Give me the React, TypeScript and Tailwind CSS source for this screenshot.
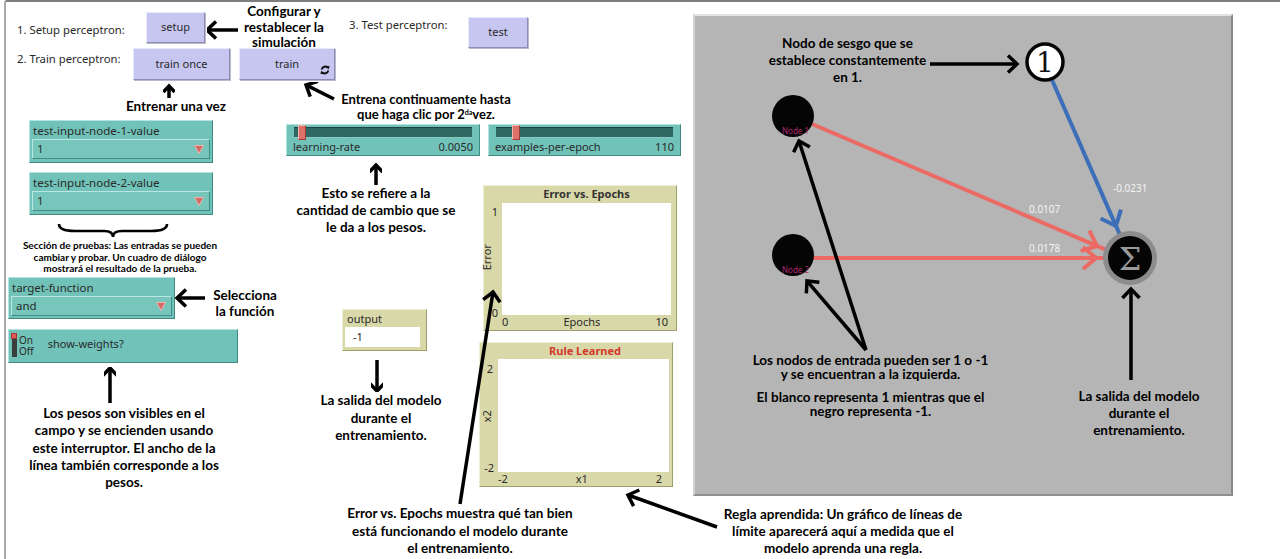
import React from "react";

const ANN = "text-center font-['Lato','Noto_Sans',sans-serif] font-bold text-black";
const NL = "font-['Noto_Sans','DejaVu_Sans',sans-serif] text-[#2a2a2a]";

function Arrow({ x1, y1, x2, y2, h = 9, w = 3.5 }: { x1: number; y1: number; x2: number; y2: number; h?: number; w?: number }) {
  const dx = x2 - x1;
  const dy = y2 - y1;
  const L = Math.hypot(dx, dy);
  const ux = dx / L;
  const uy = dy / L;
  const px = -uy;
  const py = ux;
  const bx = x2 - ux * h;
  const by = y2 - uy * h;
  const p1 = `${bx + px * h * 0.95},${by + py * h * 0.95}`;
  const p2 = `${bx - px * h * 0.95},${by - py * h * 0.95}`;
  return (
    <g stroke="black" strokeWidth={w} fill="none">
      <line x1={x1} y1={y1} x2={x2 - ux * 1.5} y2={y2 - uy * 1.5} />
      <polyline points={`${p1} ${x2},${y2} ${p2}`} strokeLinejoin="miter" />
    </g>
  );
}

function ArrowBox({ w, h, x1, y1, x2, y2, head = 9 }: { w: number; h: number; x1: number; y1: number; x2: number; y2: number; head?: number }) {
  return (
    <svg width={w} height={h} viewBox={`0 0 ${w} ${h}`} className="shrink-0 block">
      <Arrow x1={x1} y1={y1} x2={x2} y2={y2} h={head} />
    </svg>
  );
}

function LinkHead({ x1, y1, x2, y2, color, h = 13 }: { x1: number; y1: number; x2: number; y2: number; color: string; h?: number }) {
  const dx = x2 - x1;
  const dy = y2 - y1;
  const L = Math.hypot(dx, dy);
  const ux = dx / L;
  const uy = dy / L;
  const px = -uy;
  const py = ux;
  const bx = x2 - ux * h;
  const by = y2 - uy * h;
  return (
    <g stroke={color} strokeWidth={4} fill="none">
      <line x1={x1} y1={y1} x2={x2 + ux * 10} y2={y2 + uy * 10} />
      <polyline points={`${bx + px * h * 0.85},${by + py * h * 0.85} ${x2},${y2} ${bx - px * h * 0.85},${by - py * h * 0.85}`} />
    </g>
  );
}

function NLButton({ className, label, forever }: { className: string; label: string; forever?: boolean }) {
  return (
    <div
      className={`absolute flex items-center justify-center bg-[#c6c6f0] border border-t-[#e9e9fd] border-l-[#e9e9fd] border-r-[#8d8db4] border-b-[#8d8db4] shadow-[1px_1px_0_#b9b9c9] ${NL} text-[11px] ${className}`}
    >
      <span>{label}</span>
      {forever && (
        <svg className="absolute right-[4px] bottom-[4px]" width="10" height="10" viewBox="0 0 10 10">
          <path d="M1.8 4.5 A3.3 3.3 0 0 1 7.8 3" stroke="#111" strokeWidth="2" fill="none" />
          <path d="M8.2 5.5 A3.3 3.3 0 0 1 2.2 7" stroke="#111" strokeWidth="2" fill="none" />
          <polygon points="6.2,0.8 9.6,1.2 8.6,4.6" fill="#111" />
          <polygon points="3.8,9.2 0.4,8.8 1.4,5.4" fill="#111" />
        </svg>
      )}
    </div>
  );
}

function Slider({ className, label, value, handle }: { className: string; label: string; value: string; handle: string }) {
  return (
    <div
      className={`flex flex-col bg-[#71c2b8] border border-t-[#b5e3dd] border-l-[#b5e3dd] border-r-[#3f8a82] border-b-[#3f8a82] px-[6px] pt-[2px] ${className}`}
    >
      <div className="relative h-[11px] bg-[#2f6863] border-t border-t-[#1d4440] border-b border-b-[#86cbc2] mx-[1px]">
        <div className={`absolute top-[-3px] w-[8px] h-[15px] bg-[#dd7069] border border-t-[#f6b6b0] border-l-[#f6b6b0] border-r-[#9c3c36] border-b-[#9c3c36] ${handle}`} />
      </div>
      <div className={`flex justify-between items-center mt-[2px] ${NL} text-[11px] leading-[13px] text-[#1f3b38]`}>
        <span>{label}</span>
        <span>{value}</span>
      </div>
    </div>
  );
}

function Triangle() {
  return (
    <svg width="10" height="9" viewBox="0 0 10 9">
      <polygon points="0.5,0.5 9.5,0.5 5,8.5" fill="#d36a68" stroke="#f1b3ad" strokeWidth="1" />
    </svg>
  );
}

function Chooser({ className, label, value }: { className: string; label: string; value: string }) {
  return (
    <div
      className={`flex flex-col shrink-0 bg-[#71c2b8] border border-t-[#b5e3dd] border-l-[#b5e3dd] border-r-[#3f8a82] border-b-[#3f8a82] px-[2px] pt-[2px] ${className}`}
    >
      <div className={`${NL} text-[11.5px] leading-[15px] text-[#1d3835] pl-[1px]`}>{label}</div>
      <div className="flex items-center justify-between h-[20px] mt-[1px] bg-[#76c6bc] border border-t-[#b9e6e0] border-l-[#b9e6e0] border-r-[#418c84] border-b-[#418c84] pl-[4px] pr-[5px]">
        <span className={`${NL} text-[11.5px] text-[#1d3835]`}>{value}</span>
        <Triangle />
      </div>
    </div>
  );
}

export default function App() {
  return (
    <div className="relative w-[1280px] h-[559px] bg-white overflow-hidden">
      {/* outer frame */}
      <div className="absolute left-[4px] top-0 right-0 bottom-0 border-t-2 border-l-2 border-t-[#7d7d7d] border-l-[#aaaaaa] rounded-tl-[3px]" />

      {/* NetLogo labels */}
      <div className={`absolute left-[17px] top-[22px] ${NL} text-[11.3px] leading-[15px]`}>1. Setup perceptron:</div>
      <div className={`absolute left-[17px] top-[51px] ${NL} text-[11.3px] leading-[15px]`}>2. Train perceptron:</div>
      <div className={`absolute left-[349px] top-[17px] ${NL} text-[11.3px] leading-[15px]`}>3. Test perceptron:</div>

      {/* buttons */}
      <NLButton className="left-[146px] top-[12px] w-[59px] h-[31px]" label="setup" />
      <NLButton className="left-[133px] top-[48px] w-[97px] h-[32px]" label="train once" />
      <NLButton className="left-[239px] top-[48px] w-[96px] h-[32px]" label="train" forever />
      <NLButton className="left-[468px] top-[17px] w-[60px] h-[31px]" label="test" />

      {/* top annotations */}
      <div className="absolute left-[207px] top-[4px] flex items-start">
        <ArrowBox w={32} h={46} x1={31} y1={26} x2={0} y2={26} />
        <div className={`${ANN} w-[90px] text-[13.5px] leading-[15.5px]`}>
          Configurar y<br />restablecer la<br />simulación
        </div>
      </div>
      <div className="absolute left-[106px] top-[83px] w-[140px] flex flex-col items-center">
        <div className="self-start ml-[57px]">
          <ArrowBox w={12} h={15} x1={6} y1={15} x2={6} y2={3} head={6} />
        </div>
        <div className={`${ANN} text-[13.5px] leading-[17px]`}>Entrenar una vez</div>
      </div>
      <div className="absolute left-[304px] top-[82px] flex items-start">
        <ArrowBox w={32} h={20} x1={30} y1={17} x2={2} y2={3} />
        <div className={`${ANN} w-[180px] mt-[10px] text-[13px] leading-[15px]`}>
          Entrena continuamente hasta<br />que haga clic por 2<span className="relative -top-[4px] text-[7px]">da</span>vez.
        </div>
      </div>

      {/* sliders + annotation */}
      <div className="absolute left-[286px] top-[124px] flex flex-col">
        <div className="flex gap-[8px]">
          <Slider className="w-[194px] h-[32px]" label="learning-rate" value="0.0050" handle="left-[4px]" />
          <Slider className="w-[193px] h-[32px]" label="examples-per-epoch" value="110" handle="left-[16px]" />
        </div>
        <div className="flex flex-col items-center w-[180px] mt-[7px]">
          <ArrowBox w={12} h={22} x1={6} y1={22} x2={6} y2={2} head={7} />
          <div className={`${ANN} text-[13.5px] leading-[17px]`}>
            Esto se refiere a la<br />cantidad de cambio que se<br />le da a los pesos.
          </div>
        </div>
      </div>

      {/* left column */}
      <div className="absolute left-[8px] top-[120px] flex flex-col">
        <Chooser className="ml-[21px] w-[184px] h-[43px]" label="test-input-node-1-value" value="1" />
        <Chooser className="ml-[21px] mt-[9px] w-[184px] h-[43px]" label="test-input-node-2-value" value="1" />
        <svg width="120" height="16" viewBox="0 0 120 16" className="ml-[49px] mt-[7px] block">
          <path d="M2,2 Q2,9 18,9 L47,9 Q56,9 56,15 Q56,9 65,9 L94,9 Q110,9 110,2" stroke="black" strokeWidth="2.6" fill="none" />
        </svg>
        <div className={`${ANN} w-[224px] mt-[2px] text-[10px] leading-[11.7px]`}>
          Sección de pruebas: Las entradas se pueden<br />cambiar y probar. Un cuadro de diálogo<br />mostrará el resultado de la prueba.
        </div>
        <div className="flex items-center mt-[2px]">
          <Chooser className="w-[167px] h-[42px]" label="target-function" value="and" />
          <ArrowBox w={32} h={20} x1={30} y1={10} x2={2} y2={10} />
          <div className={`${ANN} self-start mt-[11px] w-[76px] text-[13.5px] leading-[15.5px]`}>
            Selecciona<br />la función
          </div>
        </div>
        <div className="flex items-center w-[230px] h-[34px] mt-[10px] bg-[#71c2b8] border border-t-[#b5e3dd] border-l-[#b5e3dd] border-r-[#3f8a82] border-b-[#3f8a82] pl-[2px]">
          <div className="flex flex-col items-start w-[6px] h-[26px]">
            <div className="w-[6px] h-[6px] bg-[#e25a55] border border-[#a33]" />
            <div className="w-[5px] h-[18px] bg-[#3a3f3e] ml-[1px]" />
          </div>
          <div className={`flex flex-col ml-[2px] ${NL} text-[10px] leading-[11px] text-[#1f2b2a]`}>
            <span>On</span>
            <span>Off</span>
          </div>
          <span className={`ml-[14px] ${NL} text-[11px] leading-[14px] text-[#1f3b38] -mt-[5px]`}>show-weights?</span>
        </div>
        <div className="ml-[96px] mt-[4px]">
          <ArrowBox w={12} h={36} x1={6} y1={36} x2={6} y2={1} />
        </div>
        <div className={`${ANN} w-[232px] mt-[2px] text-[13.5px] leading-[17.3px]`}>
          Los pesos son visibles en el<br />campo y se encienden usando<br />este interruptor. El ancho de la<br />línea también corresponde a los<br />pesos.
        </div>
      </div>

      {/* output monitor column */}
      <div className="absolute left-[306px] top-[309px] w-[150px] flex flex-col">
        <div className="ml-[36px] w-[85px] h-[42px] flex flex-col bg-[#d8d8a9] border border-t-[#eeeed2] border-l-[#eeeed2] border-r-[#9e9e6c] border-b-[#9e9e6c] px-[2px]">
          <div className={`${NL} text-[11px] leading-[17px] pl-[2px]`}>output</div>
          <div className={`bg-white h-[20px] w-[75px] flex items-center pl-[8px] ${NL} text-[11px]`}>-1</div>
        </div>
        <div className="ml-[65px] mt-[9px]">
          <ArrowBox w={12} h={32} x1={6} y1={0} x2={6} y2={31} />
        </div>
        <div className={`${ANN} text-[13.5px] leading-[17.5px]`}>
          La salida del modelo<br />durante el<br />entrenamiento.
        </div>
      </div>

      {/* plots */}
      <div className="absolute left-[479px] top-[185px] flex flex-col gap-[11px]">
        <div className="ml-[4px] w-[194px] h-[146px] flex flex-col bg-[#d8d8a9] border border-t-[#eeeed2] border-l-[#eeeed2] border-r-[#9e9e6c] border-b-[#9e9e6c]">
          <div className={`h-[17px] pl-[19px] pr-[6px] flex items-center justify-center ${NL} font-bold text-[11px] text-[#333]`}>Error vs. Epochs</div>
          <div className="flex h-[112px]">
            <div className={`relative w-[18px] ${NL} text-[11px]`}>
              <span className="absolute right-[4px] top-[1px]">1</span>
              <span className="absolute right-[4px] bottom-[-6px]">0</span>
              <span className="absolute left-[-10px] top-[46px] -rotate-90">Error</span>
            </div>
            <div className="w-[169px] bg-white" />
          </div>
          <div className={`flex items-center justify-between h-[15px] pl-[18px] pr-[8px] ${NL} text-[11px]`}>
            <span>0</span>
            <span>Epochs</span>
            <span>10</span>
          </div>
        </div>
        <div className="w-[194px] h-[145px] flex flex-col bg-[#d8d8a9] border border-t-[#eeeed2] border-l-[#eeeed2] border-r-[#9e9e6c] border-b-[#9e9e6c]">
          <div className={`h-[16px] pl-[18px] flex items-center justify-center ${NL} font-bold text-[11px] text-[#d2392b]`}>Rule Learned</div>
          <div className="flex h-[113px]">
            <div className={`relative w-[18px] ${NL} text-[11px]`}>
              <span className="absolute right-[5px] top-[2px]">2</span>
              <span className="absolute right-[4px] bottom-[-4px]">-2</span>
              <span className="absolute left-[1px] top-[49px] -rotate-90">x2</span>
            </div>
            <div className="w-[171px] bg-white" />
          </div>
          <div className={`flex items-center justify-between h-[14px] pl-[18px] pr-[10px] ${NL} text-[11px]`}>
            <span>-2</span>
            <span>x1</span>
            <span>2</span>
          </div>
        </div>
      </div>

      {/* bottom annotations */}
      <div className={`absolute ${ANN} left-[320px] top-[505px] w-[280px] text-[13.5px] leading-[17.5px]`}>
        Error vs. Epochs muestra qué tan bien<br />está funcionando el modelo durante<br />el entrenamiento.
      </div>
      <div className={`absolute ${ANN} left-[703px] top-[506px] w-[280px] text-[13.5px] leading-[17px]`}>
        Regla aprendida: Un gráfico de líneas de<br />límite aparecerá aquí a medida que el<br />modelo aprenda una regla.
      </div>

      {/* world view */}
      <div className="absolute left-[693px] top-[14px] w-[540px] h-[482px] bg-[#b5b5b5] border-2 border-t-[#e2e2e2] border-l-[#d2d2d2] border-r-[#8a8a8a] border-b-[#8f8f8f]">
        <div className={`absolute ${ANN} left-[60px] top-[19px] w-[185px] text-[13.5px] leading-[17px]`}>
          Nodo de sesgo que se<br />establece constantemente<br />en 1.
        </div>
        <div className={`absolute left-[38px] top-[338px] w-[275px] flex flex-col gap-[10px] ${ANN} text-[13.5px] leading-[13.5px]`}>
          <div>
            Los nodos de entrada pueden ser 1 o -1<br />y se encuentran a la izquierda.
          </div>
          <div>
            El blanco representa 1 mientras que el<br />negro representa -1.
          </div>
        </div>
        <div className={`absolute ${ANN} left-[369px] top-[372px] w-[150px] text-[13.5px] leading-[17px]`}>
          La salida del modelo<br />durante el<br />entrenamiento.
        </div>
      </div>

      {/* drawings overlay: network + long arrows */}
      <svg className="absolute left-0 top-0 pointer-events-none" width="1280" height="559" viewBox="0 0 1280 559">
        {/* links */}
        <LinkHead x1={812} y1={124} x2={1097} y2={246} color="#ec6a64" />
        <LinkHead x1={813} y1={258} x2={1096} y2={258} color="#ec6a64" />
        <LinkHead x1={1052} y1={80} x2={1116} y2={226} color="#3d6fb8" />
        {/* weight labels */}
        <text x="1113" y="192" fill="#f4f4f4" fontSize="10" fontFamily="'Noto Sans', sans-serif">-0.0231</text>
        <text x="1029" y="213" fill="#f4f4f4" fontSize="10" fontFamily="'Noto Sans', sans-serif">0.0107</text>
        <text x="1029" y="252" fill="#f4f4f4" fontSize="10" fontFamily="'Noto Sans', sans-serif">0.0178</text>
        {/* input nodes */}
        <circle cx="793" cy="116" r="21" fill="#050505" />
        <circle cx="793" cy="255" r="21" fill="#050505" />
        <text x="782" y="134" fill="#b0286e" fontSize="8" fontFamily="'Noto Sans', sans-serif">Node 1</text>
        <text x="782" y="273" fill="#b0286e" fontSize="8" fontFamily="'Noto Sans', sans-serif">Node 2</text>
        {/* bias node */}
        <circle cx="1045" cy="62" r="18" fill="#ffffff" stroke="#050505" strokeWidth="3.5" />
        <text x="1045" y="72" textAnchor="middle" fill="#111" fontSize="28" fontFamily="'DejaVu Serif', serif" fontWeight="300">1</text>
        {/* sum node */}
        <circle cx="1130" cy="258" r="27" fill="#8c8c8c" />
        <circle cx="1130" cy="258" r="22" fill="#050505" />
        <text x="1130" y="270" textAnchor="middle" fill="#9a9a9a" fontSize="32" fontFamily="'DejaVu Serif', serif">Σ</text>

        {/* arrows that cross other content */}
        <Arrow x1={460} y1={504} x2={493} y2={292} />
        <Arrow x1={717} y1={527} x2={628} y2={495} />
        <Arrow x1={930} y1={64} x2={1017} y2={64} />
        <Arrow x1={866} y1={350} x2={799} y2={141} />
        <Arrow x1={866} y1={350} x2={807} y2={281} />
        <Arrow x1={1131} y1={380} x2={1131} y2={289} />
      </svg>
    </div>
  );
}
